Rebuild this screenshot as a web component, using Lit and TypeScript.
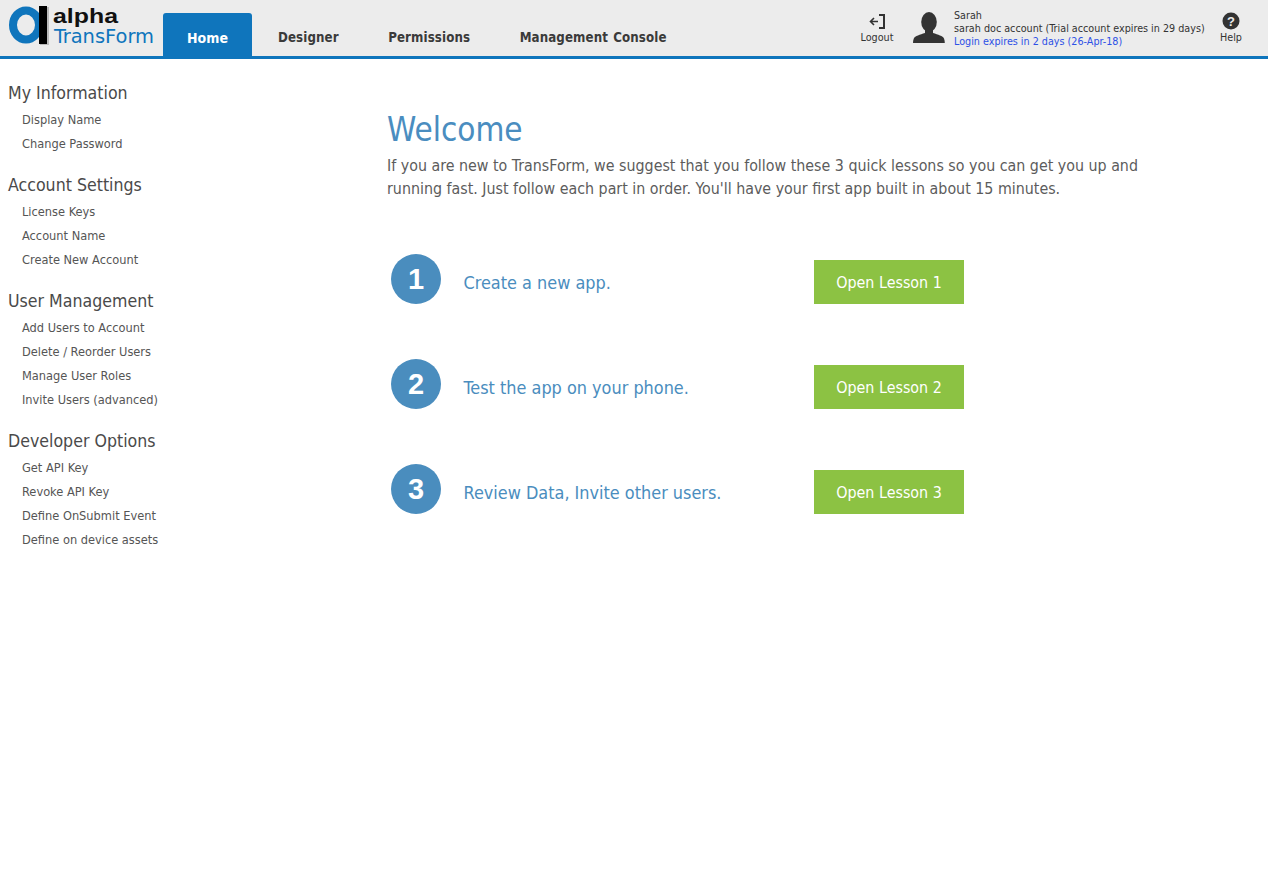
import { LitElement, html, css, svg } from "lit";
import { customElement } from "lit/decorators.js";

const SECTIONS = [
  { title: "My Information", items: ["Display Name", "Change Password"] },
  { title: "Account Settings", items: ["License Keys", "Account Name", "Create New Account"] },
  { title: "User Management", items: ["Add Users to Account", "Delete / Reorder Users", "Manage User Roles", "Invite Users (advanced)"] },
  { title: "Developer Options", items: ["Get API Key", "Revoke API Key", "Define OnSubmit Event", "Define on device assets"] },
];
const LESSONS = ["Create a new app.", "Test the app on your phone.", "Review Data, Invite other users."];
const TABS = ["Designer", "Permissions", "Management Console"];

@customElement("app-root")
export class AppRoot extends LitElement {
  static styles = css`
    :host { display: block; min-height: 879px; background: #fff; font-family: "DejaVu Sans", Tahoma, sans-serif; font-stretch: condensed; color: #555; }
    header { height: 56px; background: #ececec; border-bottom: 3px solid #0f75bc; display: flex; align-items: flex-end; }
    .logo { width: 163px; height: 56px; flex: none; display: block; }
    .tab { height: 43px; display: flex; align-items: center; justify-content: center; padding-top: 6px; box-sizing: border-box; font-size: 13.2px; letter-spacing: 0.1px; word-spacing: 1px; font-weight: bold; color: #3a3a3a; white-space: nowrap; }
    .tab.active { width: 89px; background: #0f75bc; color: #fff; border-radius: 3px 3px 0 0; margin-right: 26px; font-size: 14px; letter-spacing: 0; }
    .tabs { display: flex; gap: 49.5px; }
    .right { margin-left: auto; height: 56px; display: flex; font-size: 10.7px; color: #333; }
    .tool { display: flex; flex-direction: column; align-items: center; padding-top: 12px; box-sizing: border-box; }
    .tool svg { display: block; height: 19px; }
    .tool span { line-height: 13px; }
    .logout { width: 34px; margin-right: 19px; }
    .help { width: 24px; margin: 0 25px 0 14px; }
    .person { margin: 11px 9px 0 0; width: 32px; height: 32px; display: block; }
    .user { padding-top: 9px; line-height: 13px; white-space: nowrap; width: 251px; }
    .user .exp { color: #2d50e6; }
    main { display: flex; }
    nav { width: 387px; flex: none; padding: 23px 0 0 8px; box-sizing: border-box; }
    nav h3 { margin: 0; font-size: 17.6px; font-weight: normal; line-height: 22px; color: #4a4a4a; }
    nav ul { list-style: none; margin: 4px 0 18px; padding: 0 0 0 14px; }
    nav li { font-size: 12.7px; line-height: 24px; color: #555; }
    .content { padding-top: 51px; width: 800px; }
    h1 { margin: 0; font-size: 33px; font-weight: normal; line-height: 40px; color: #4a8dc0; }
    .intro { margin: 4px 0 0; font-size: 15.85px; line-height: 23px; color: #5c5c5c; width: 770px; }
    .lessons { margin-top: 54px; display: flex; flex-direction: column; gap: 55px; }
    .lesson { display: flex; align-items: center; height: 50px; padding-left: 4px; }
    .num { width: 50px; height: 50px; border-radius: 50%; background: #4a8dbe; color: #fff; font: bold 29px "Liberation Sans", Arial, sans-serif; display: flex; align-items: center; justify-content: center; flex: none; }
    .label { width: 350.5px; margin-left: 22.5px; padding-top: 6px; font-size: 17.9px; color: #4a8dbe; }
    .btn { width: 150px; height: 44px; margin-top: 6px; background: #8cc243; color: #fff; font-size: 15.9px; display: flex; align-items: center; justify-content: center; }
  `;

  render() {
    return html`
      <header>
        <svg class="logo" viewBox="0 0 163 56">
          <ellipse cx="26" cy="25" rx="13" ry="14.500" fill="none" stroke="#0f75bc" stroke-width="8"/>
          <rect x="40" y="7" width="9" height="38" fill="#bbb"/>
          <rect x="39" y="6" width="8" height="38" fill="#000"/>
          <text x="53" y="23" font-family="'Liberation Sans',sans-serif" font-weight="bold" font-size="21" fill="#111" textLength="65" lengthAdjust="spacingAndGlyphs">alpha</text>
          <text x="54" y="43" font-family="'DejaVu Sans',sans-serif" font-size="20" fill="#0f75bc" textLength="100" lengthAdjust="spacingAndGlyphs">TransForm</text>
        </svg>
        <div class="tab active">Home</div>
        <div class="tabs">${TABS.map((t) => html`<div class="tab">${t}</div>`)}</div>
        <div class="right">
          <div class="tool logout">
            <svg viewBox="0 0 20 19" width="20">${svg`<path d="M12 3h5v13h-5" fill="none" stroke="#333" stroke-width="2"/><path d="M11 9.500H3.500M7 6 3.500 9.500 7 13" fill="none" stroke="#333" stroke-width="1.600"/>`}</svg>
            <span>Logout</span>
          </div>
          <svg class="person" viewBox="0 0 32 32">${svg`<ellipse cx="16" cy="11" rx="7.800" ry="10" fill="#333"/><path d="M12 19h8v3c5 1.500 10 3 11 5.500.6 1.500.8 3 .8 4.500H0c0-1.500.2-3 .8-4.500C2 25 7 23.500 12 22z" fill="#333"/>`}</svg>
          <div class="user">
            <div>Sarah</div>
            <div>sarah doc account (Trial account expires in 29 days)</div>
            <div class="exp">Login expires in 2 days (26-Apr-18)</div>
          </div>
          <div class="tool help">
            <svg viewBox="0 0 18 18" width="18">${svg`<circle cx="9" cy="8.500" r="8.500" fill="#333"/><text x="9" y="13" text-anchor="middle" font-family="'Liberation Sans',sans-serif" font-weight="bold" font-size="13" fill="#ececec">?</text>`}</svg>
            <span>Help</span>
          </div>
        </div>
      </header>
      <main>
        <nav>
          ${SECTIONS.map((s) => html`<h3>${s.title}</h3><ul>${s.items.map((i) => html`<li>${i}</li>`)}</ul>`)}
        </nav>
        <div class="content">
          <h1>Welcome</h1>
          <p class="intro">If you are new to TransForm, we suggest that you follow these 3 quick lessons so you can get you up and running fast. Just follow each part in order. You'll have your first app built in about 15 minutes.</p>
          <div class="lessons">
            ${LESSONS.map((l, i) => html`
              <div class="lesson">
                <div class="num">${i + 1}</div>
                <div class="label">${l}</div>
                <div class="btn">Open Lesson ${i + 1}</div>
              </div>`)}
          </div>
        </div>
      </main>
    `;
  }
}
